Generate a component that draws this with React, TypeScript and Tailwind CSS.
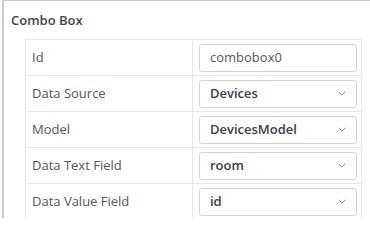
import React from "react";

type Row = {
  label: string;
  value: string;
  select?: boolean;
};

const rows: Row[] = [
  { label: "Id", value: "combobox0" },
  { label: "Data Source", value: "Devices", select: true },
  { label: "Model", value: "DevicesModel", select: true },
  { label: "Data Text Field", value: "room", select: true },
  { label: "Data Value Field", value: "id", select: true },
];

function Chevron() {
  return (
    <svg width="8" height="5" viewBox="0 0 8 5" className="shrink-0">
      <path d="M0.8 0.8 L4 3.9 L7.2 0.8" fill="none" stroke="#808890" strokeWidth="1" />
    </svg>
  );
}

export default function App() {
  return (
    <div
      className="w-[370px] h-[218px] overflow-hidden bg-white"
      style={{ fontFamily: '"Open Sans", "Noto Sans", sans-serif' }}
    >
      <div className="ml-[2px] h-full border-l-2 border-t border-[#c9cdd2] pt-[10px]">
        {/* Title */}
        <div className="pl-[7px] h-[19px] leading-[19px] mb-[9px] text-[13px] font-semibold text-[#3a4652]">
          Combo Box
        </div>

        {/* Property grid */}
        <div className="ml-[21px] w-[337px] border border-[#e4e8ec]">
          {rows.map((row, idx) => (
            <div
              key={row.label}
              className={`flex ${idx > 0 ? "border-t border-[#e4e8ec] h-[36px]" : "h-[35px]"}`}
            >
              <div className="w-[167px] shrink-0 border-r border-[#e4e8ec] pl-[6px] flex items-center text-[13px] text-[#50565c]">
                {row.label}
              </div>
              <div className="flex-1 flex items-center pl-[6px] pr-[4px]">
                <div className="w-full h-[28px] rounded-[3px] border border-[#cfd4d9] flex items-center justify-between pl-[10px] pr-[10px] text-[13px]">
                  {row.select ? (
                    <>
                      <span className="font-semibold text-[#36404a]">{row.value}</span>
                      <Chevron />
                    </>
                  ) : (
                    <span className="text-[#50575e]">{row.value}</span>
                  )}
                </div>
              </div>
            </div>
          ))}
        </div>
      </div>
    </div>
  );
}
